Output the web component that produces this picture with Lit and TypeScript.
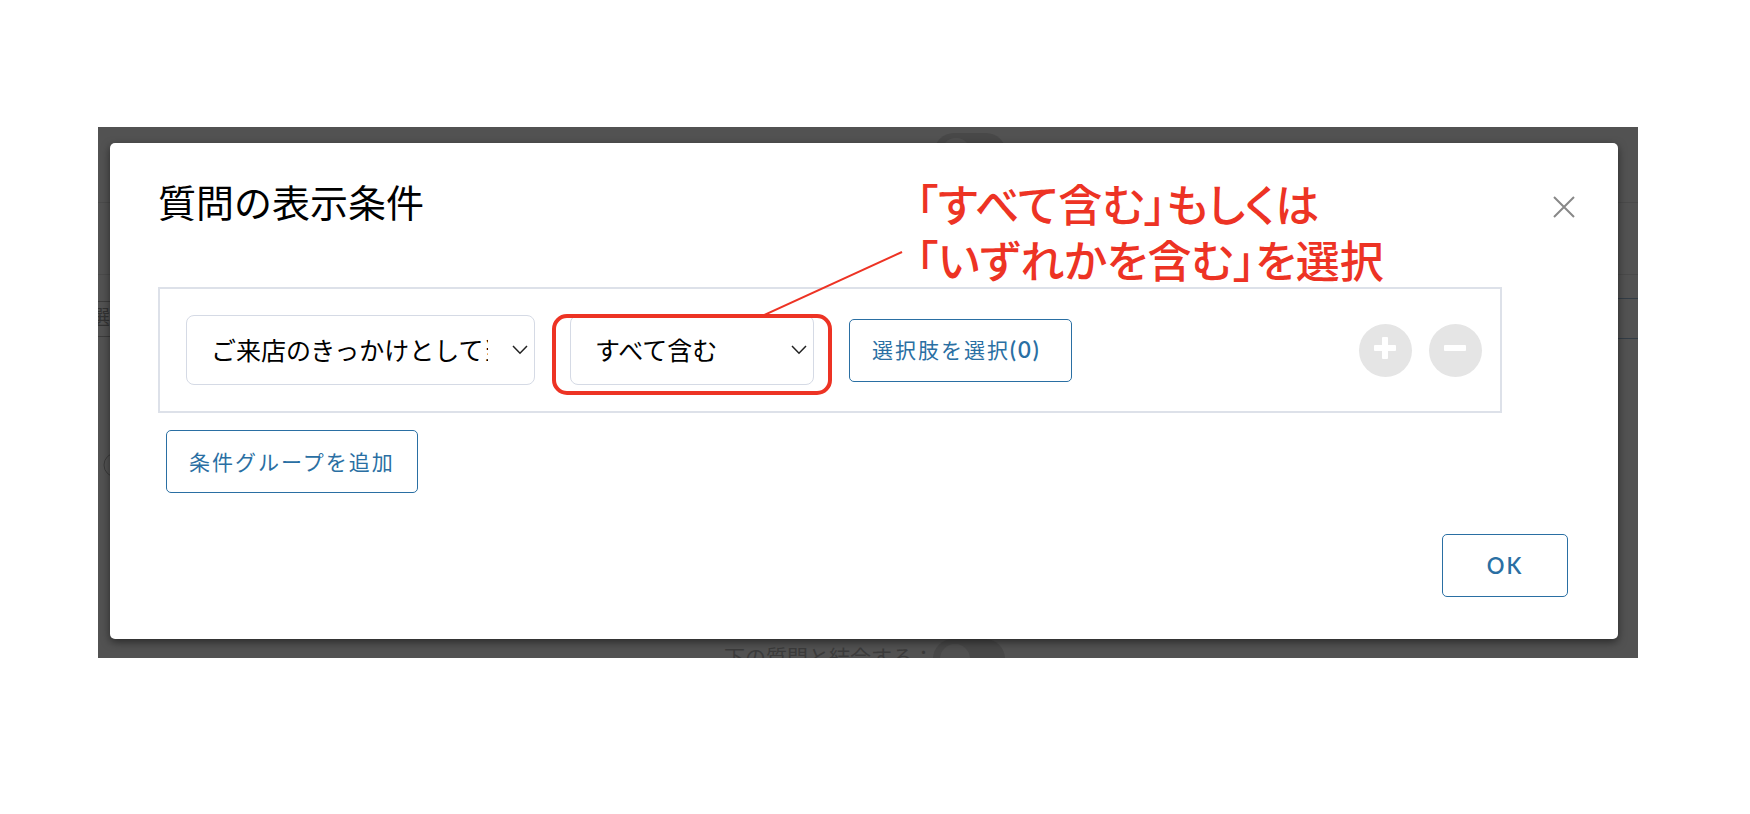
import { LitElement, html, css, svg } from "lit";
import { customElement } from "lit/decorators.js";

const chevron = html`<svg class="chevron" viewBox="0 0 16 10" aria-hidden="true">
  <path d="M1 1 L8 8.2 L15 1" fill="none" stroke="#222" stroke-width="1.5" />
</svg>`;

const hline = (y: number, color: string) =>
  svg`<rect x="0" y=${y} width="20" height="1" fill=${color} />`;

@customElement("app-root")
export class AppRoot extends LitElement {
  static styles = css`
    :host {
      display: block;
      background: #fff;
      color: #000;
      font-family: "Noto Sans CJK JP", sans-serif;
    }
    * {
      box-sizing: border-box;
    }
    .backdrop {
      display: grid;
      grid-template-columns: 12px 1fr 20px;
      grid-template-rows: 16px auto 19px;
      margin: 127px 112px 0 98px;
      background: #525252;
    }
    .strip {
      grid-column: 1 / -1;
      display: flex;
      align-items: flex-start;
      overflow: hidden;
      font-size: 21px;
      line-height: 30px;
      color: #3b3b3b;
    }
    .strip.top {
      padding: 6px 0 0 836px;
    }
    .strip.bottom {
      padding-left: 626px;
    }
    .strip-label {
      width: 209px;
      padding-top: 2px;
      white-space: nowrap;
    }
    .toggle {
      flex: none;
      width: 72px;
      height: 40px;
      padding: 5px 7px;
      border-radius: 20px;
      background: #484848;
    }
    .knob {
      display: block;
      width: 30px;
      height: 30px;
      border-radius: 50%;
      background: #505050;
    }
    .edge {
      display: block;
      width: 100%;
      height: 496px;
      overflow: hidden;
    }
    .modal {
      position: relative;
      display: flex;
      flex-direction: column;
      padding: 30px 50px 42px 48px;
      border-radius: 5px;
      background: #fff;
      box-shadow: 0 3px 9px rgba(0, 0, 0, 0.5);
    }
    .head {
      display: flex;
      align-items: center;
      justify-content: space-between;
      height: 56px;
    }
    .title {
      margin: 0;
      font-size: 38px;
      line-height: 56px;
      font-weight: 400;
    }
    .close {
      width: 36px;
      height: 36px;
      margin: 12px -14px 0 0;
      padding: 7px;
      border: 0;
      background: none;
    }
    .close svg {
      display: block;
      width: 22px;
      height: 22px;
    }
    .group {
      display: flex;
      align-items: center;
      margin: 58px 66px 0 0;
      padding: 26px 18px 26px 26px;
      border: 2px solid #dde1e9;
    }
    .field {
      position: relative;
      height: 70px;
    }
    .subject {
      width: 349px;
      margin-right: 35px;
    }
    .operator {
      width: 244px;
      margin-right: 35px;
    }
    select {
      display: block;
      width: 100%;
      height: 70px;
      padding: 0 46px 2px 24px;
      appearance: none;
      border: 1px solid #d5dae5;
      border-radius: 8px;
      background: #fff;
      color: #000;
      font: 400 25px/36px "Noto Sans CJK JP", sans-serif;
      text-overflow: clip;
    }
    .chevron {
      position: absolute;
      right: 7px;
      top: 30px;
      width: 16px;
      height: 10px;
      pointer-events: none;
    }
    .btn {
      height: 63px;
      padding: 0 22px 2px 22px;
      border: 1px solid #2a6fa3;
      border-radius: 5px;
      background: #fff;
      color: #2a6fa3;
      font: 400 21px/30px "Noto Sans CJK JP", sans-serif;
      letter-spacing: 2px;
      white-space: nowrap;
    }
    .choose {
      min-width: 223px;
      text-align: left;
    }
    .latin {
      font-family: Lato, sans-serif;
      font-size: 22px;
      font-weight: 600;
    }
    .round-actions {
      display: flex;
      gap: 17px;
      margin-left: auto;
    }
    .round {
      display: block;
      width: 53px;
      height: 53px;
      padding: 0;
      border: 0;
      border-radius: 50%;
      background: #e5e5e5;
    }
    .round svg {
      display: block;
      width: 53px;
      height: 53px;
    }
    .add {
      align-self: flex-start;
      margin: 17px 0 0 8px;
    }
    .ok {
      align-self: flex-end;
      width: 126px;
      padding-bottom: 0;
      margin-top: 41px;
    }
    .ring {
      position: absolute;
      inset: -1px -18px -10px -18px;
      border: 4px solid #ed3324;
      border-radius: 15px;
      pointer-events: none;
    }
    .leader {
      position: absolute;
      left: 194px;
      top: -64px;
      width: 140px;
      height: 66px;
      pointer-events: none;
    }
    .note {
      position: absolute;
      left: 346px;
      top: -140px;
      margin: 0;
      color: #ed3324;
      font-size: 44px;
      line-height: 56px;
      font-weight: 500;
      font-feature-settings: "palt";
      white-space: nowrap;
      pointer-events: none;
    }
  `;

  render() {
    return html`
      <div class="backdrop">
        <div class="strip top"><span class="toggle"><span class="knob"></span></span></div>
        <svg class="edge" aria-hidden="true">
          ${hline(59, "#4a4a4a")} ${hline(131, "#4a4a4a")}
          ${hline(158, "#3c3c3c")} ${hline(193, "#3c3c3c")}
          <text x="-8" y="182" font-size="20" fill="#333">選</text>
          <circle cx="18" cy="322" r="12" fill="none" stroke="#3a3a3a" />
        </svg>
        <section class="modal" role="dialog" aria-labelledby="title">
          <header class="head">
            <h1 class="title" id="title">質問の表示条件</h1>
            <button class="close" aria-label="閉じる">
              <svg viewBox="0 0 22 22">
                <path d="M1 1 L21 21 M21 1 L1 21" stroke="#888" stroke-width="2" />
              </svg>
            </button>
          </header>
          <div class="group">
            <div class="field subject">
              <select aria-label="質問">
                <option>ご来店のきっかけとして当てはまるもの</option>
              </select>
              ${chevron}
            </div>
            <div class="field operator">
              <select aria-label="条件">
                <option>すべて含む</option>
                <option>いずれかを含む</option>
              </select>
              ${chevron}
              <div class="ring"></div>
              <svg class="leader" viewBox="0 0 140 66" aria-hidden="true">
                <path d="M0 64 L138 1" stroke="#ed3324" stroke-width="2" />
              </svg>
              <p class="note">「すべて含む」もしくは<br />「いずれかを含む」を選択</p>
            </div>
            <button class="btn choose">選択肢を選択<span class="latin">(0)</span></button>
            <div class="round-actions">
              <button class="round" aria-label="追加">
                <svg viewBox="0 0 53 53">
                  <rect x="15" y="21" width="22" height="6" rx="1" fill="#fff" />
                  <rect x="23" y="13" width="6" height="22" rx="1" fill="#fff" />
                </svg>
              </button>
              <button class="round" aria-label="削除">
                <svg viewBox="0 0 53 53">
                  <rect x="15" y="21" width="22" height="6" rx="1" fill="#fff" />
                </svg>
              </button>
            </div>
          </div>
          <button class="btn add">条件グループを追加</button>
          <button class="btn ok"><span class="latin">OK</span></button>
        </section>
        <svg class="edge" aria-hidden="true">
          ${hline(59, "#4a4a4a")} ${hline(131, "#4a4a4a")}
          ${hline(155, "#333d46")} ${hline(195, "#333d46")}
        </svg>
        <div class="strip bottom">
          <span class="strip-label">下の質問と結合する：</span>
          <span class="toggle"><span class="knob"></span></span>
        </div>
      </div>
    `;
  }
}
